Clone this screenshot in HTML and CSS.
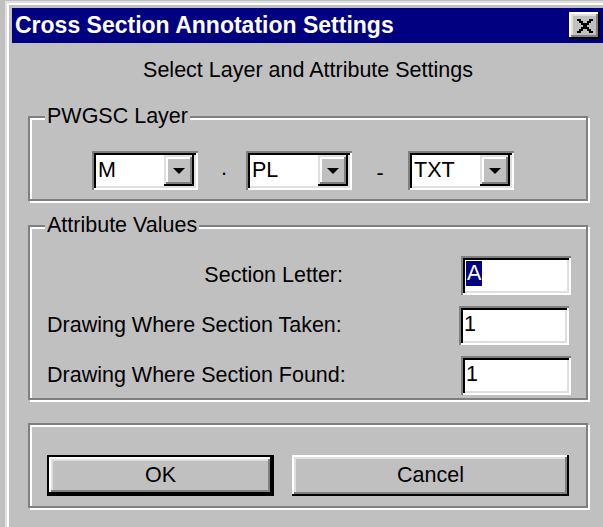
FILE: index.html
```html
<!DOCTYPE html>
<html lang="en">
<head>
<meta charset="utf-8">
<title>Cross Section Annotation Settings</title>
<link rel="stylesheet" href="styles.css">
</head>
<body>
<div class="window">
  <div class="window-inner">
    <div class="titlebar">
      <span class="title">Cross Section Annotation Settings</span>
      <button class="close" aria-label="Close">
        <svg width="16" height="14" viewBox="0 0 16 14"><path fill="#000" d="M0 0h4v2H0zM12 0h4v2h-4zM2 2h4v2H2zM10 2h4v2h-4zM4 4h8v2H4zM6 6h4v2H6zM4 8h8v2H4zM2 10h4v2H2zM10 10h4v2h-4zM0 12h4v2H0zM12 12h4v2h-4z"/></svg>
      </button>
    </div>
    <div class="body">
      <p class="subtitle">Select Layer and Attribute Settings</p>

      <section class="group layer-group">
        <span class="group-title">PWGSC Layer</span>
        <div class="combos">
          <div class="combo">
            <span class="combo-value">M</span>
            <span class="drop"><svg width="12" height="6" viewBox="0 0 12 6"><path fill="#000" d="M0 0h12L6 6z"/></svg></span>
          </div>
          <span class="sep sep-a">·</span>
          <div class="combo">
            <span class="combo-value">PL</span>
            <span class="drop"><svg width="12" height="6" viewBox="0 0 12 6"><path fill="#000" d="M0 0h12L6 6z"/></svg></span>
          </div>
          <span class="sep sep-b">-</span>
          <div class="combo">
            <span class="combo-value">TXT</span>
            <span class="drop"><svg width="12" height="6" viewBox="0 0 12 6"><path fill="#000" d="M0 0h12L6 6z"/></svg></span>
          </div>
        </div>
      </section>

      <section class="group attr-group">
        <span class="group-title">Attribute Values</span>
        <div class="fields">
          <span class="field-label label-right">Section Letter:</span>
          <div class="edit edit-letter"><span class="sel">A</span></div>
          <span class="field-label">Drawing Where Section Taken:</span>
          <div class="edit edit-taken">1</div>
          <span class="field-label">Drawing Where Section Found:</span>
          <div class="edit">1</div>
        </div>
      </section>

      <section class="group button-group">
        <button class="btn btn-default btn-ok">OK</button>
        <button class="btn btn-cancel">Cancel</button>
      </section>
    </div>
  </div>
</div>
</body>
</html>
```

FILE: styles.css
```css
* {
  box-sizing: border-box;
}

html,
body {
  margin: 0;
  height: 100%;
}

body {
  background: #c0c0c0;
  font-family: "Liberation Sans", Arial, sans-serif;
  font-size: 21.5px;
  color: #000;
  overflow: hidden;
}

/* window frame: light outer edge, white inner edge */
.window {
  margin: 1px 0 0 5px;
  height: calc(100% - 1px);
  border-top: 2px solid #dfdfdf;
  border-left: 2px solid #dfdfdf;
}

.window-inner {
  height: 100%;
  border-top: 2px solid #fff;
  border-left: 2px solid #fff;
  padding: 3px 0 0 3px;
}

.titlebar {
  height: 35px;
  background: #000080;
  display: flex;
  align-items: center;
  padding: 0 3px 0 3px;
}

.title {
  color: #fff;
  font-weight: bold;
  font-size: 23px;
  line-height: 1;
  white-space: nowrap;
}

.close {
  margin-left: auto;
  width: 31px;
  height: 27px;
  padding: 0;
  border: 0;
  background: #c0c0c0;
  display: flex;
  align-items: center;
  justify-content: center;
  box-shadow: inset -2px -2px #000, inset 2px 2px #fff, inset -4px -4px #808080, inset 4px 4px #dfdfdf;
}

.body {
  padding-left: 16px;
}

.subtitle {
  margin: 15px 0 0;
  width: 560px;
  line-height: 24px;
  text-align: center;
}

/* etched group box */
.group {
  position: relative;
  width: 560px;
  border: 2px solid #808080;
  box-shadow: inset 2px 2px #fff, 2px 2px #fff;
}

.group-title {
  position: absolute;
  top: -14px;
  left: 15px;
  padding: 0 2px;
  background: #c0c0c0;
  line-height: 24px;
  white-space: nowrap;
}

.layer-group {
  margin-top: 34px;
  height: 85px;
  padding: 33px 0 0 62px;
}

.combos {
  display: flex;
  align-items: center;
}

/* sunken field border */
.combo,
.edit {
  background: #fff;
  box-shadow: inset 2px 2px #808080, inset -2px -2px #fff, inset 4px 4px #000, inset -4px -4px #dfdfdf;
}

.combo {
  width: 106px;
  height: 39px;
  padding: 4px;
  display: flex;
}

.combo-value {
  flex: 1;
  padding-left: 2px;
  line-height: 31px;
}

.drop {
  width: 30px;
  background: #c0c0c0;
  display: flex;
  align-items: center;
  justify-content: center;
  box-shadow: inset -2px -2px #000, inset 2px 2px #dfdfdf, inset -4px -4px #808080, inset 4px 4px #fff;
}

.sep {
  text-align: center;
  line-height: 1;
  padding-top: 6px;
}

.sep-a {
  width: 48px;
  padding-left: 4px;
}

.sep-b {
  width: 56px;
}

.attr-group {
  margin-top: 24px;
  height: 175px;
  padding: 29px 0 0 17px;
}

.fields {
  display: grid;
  grid-template-columns: 296px 110px;
  column-gap: 118px;
  row-gap: 11px;
  align-items: center;
}

.field-label {
  white-space: nowrap;
}

.label-right {
  justify-self: end;
}

.edit {
  width: 110px;
  height: 39px;
  padding: 4px 0 0 5px;
  line-height: 29px;
}

.edit-taken {
  margin-left: -2px;
}

.sel {
  display: inline-block;
  background: #000080;
  color: #fff;
  line-height: 25px;
  padding: 0 1px;
  margin-top: 1px;
  vertical-align: top;
}

.button-group {
  margin-top: 23px;
  height: 85px;
  padding: 30px 0 0 17px;
  display: flex;
  gap: 18px;
}

/* raised push button */
.btn {
  height: 41px;
  padding: 0;
  border: 0;
  background: #c0c0c0;
  font: inherit;
  color: #000;
  box-shadow: inset -2px -2px #000, inset 2px 2px #fff, inset -4px -4px #808080, inset 4px 4px #dfdfdf;
}

.btn-default {
  border: 2px solid #000;
}

.btn-ok {
  width: 227px;
}

.btn-cancel {
  width: 277px;
}
```
